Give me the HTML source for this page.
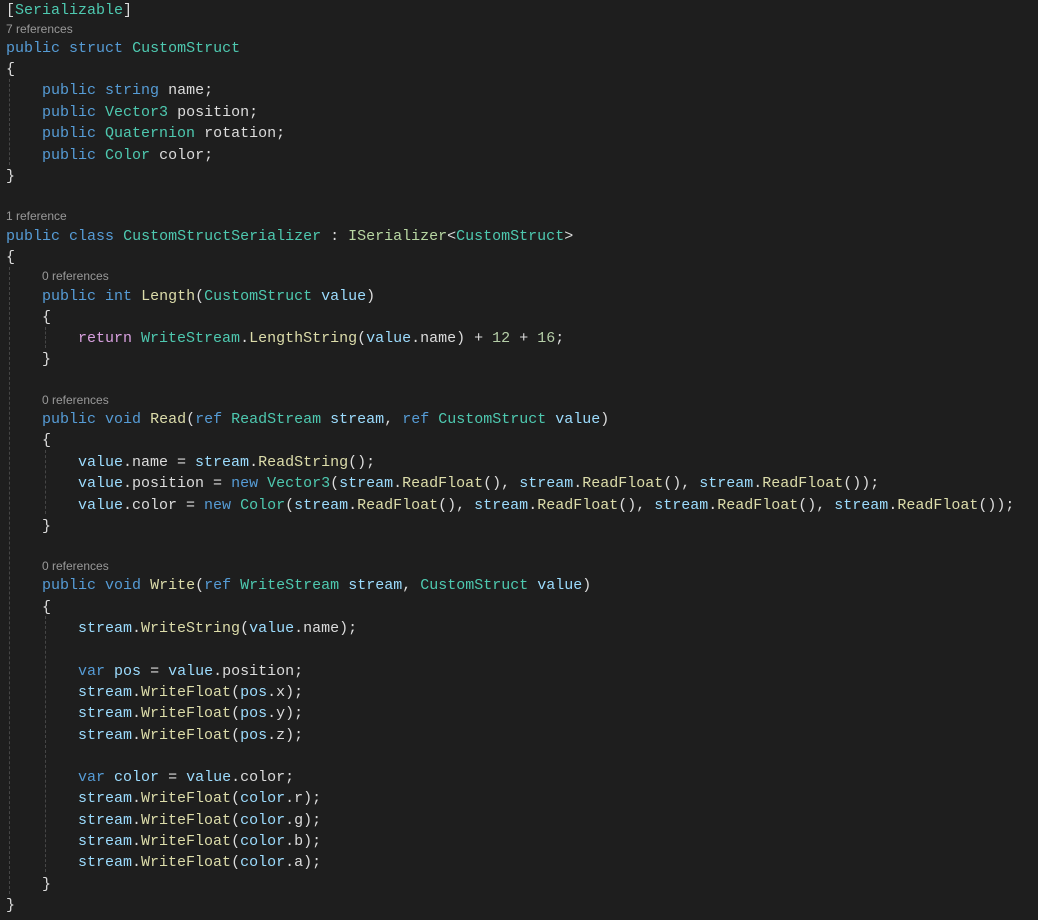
<!DOCTYPE html>
<html><head><meta charset="utf-8"><style>
html,body{margin:0;padding:0;background:#1e1e1e;width:1038px;height:920px;overflow:hidden}
.l{position:absolute;left:6px;height:21.33px;line-height:21.33px;white-space:pre;font-family:"Liberation Mono",monospace;font-size:15px;color:#dcdcdc;margin-top:2px}
.cl{position:absolute;white-space:pre;font-family:"Liberation Sans",sans-serif;font-size:12px;color:#999;height:16px;line-height:16px;margin-top:1px}
.g{position:absolute;width:0;border-left:1px dashed #464646}
.k{color:#569cd6}.t{color:#4ec9b0}.i{color:#b8d7a3}.v{color:#9cdcfe}.m{color:#dcdcaa}.c{color:#d8a0df}.n{color:#b5cea8}
</style></head><body>
<div class="g" style="left:9px;top:79px;height:86px"></div>
<div class="g" style="left:9px;top:267px;height:627px"></div>
<div class="g" style="left:45px;top:327px;height:21px"></div>
<div class="g" style="left:45px;top:450px;height:64px"></div>
<div class="g" style="left:45px;top:616px;height:256px"></div>

<div class="l" style="top:-2px">[<span class="t">Serializable</span>]</div>
<div class="cl" style="left:6px;top:20px">7 references</div>
<div class="l" style="top:36px"><span class="k">public</span> <span class="k">struct</span> <span class="t">CustomStruct</span></div>
<div class="l" style="top:57px">{</div>
<div class="l" style="top:78px">    <span class="k">public</span> <span class="k">string</span> name;</div>
<div class="l" style="top:100px">    <span class="k">public</span> <span class="t">Vector3</span> position;</div>
<div class="l" style="top:121px">    <span class="k">public</span> <span class="t">Quaternion</span> rotation;</div>
<div class="l" style="top:143px">    <span class="k">public</span> <span class="t">Color</span> color;</div>
<div class="l" style="top:164px">}</div>

<div class="cl" style="left:6px;top:207px">1 reference</div>
<div class="l" style="top:224px"><span class="k">public</span> <span class="k">class</span> <span class="t">CustomStructSerializer</span> : <span class="i">ISerializer</span>&lt;<span class="t">CustomStruct</span>&gt;</div>
<div class="l" style="top:245px">{</div>
<div class="cl" style="left:42px;top:267px">0 references</div>
<div class="l" style="top:284px">    <span class="k">public</span> <span class="k">int</span> <span class="m">Length</span>(<span class="t">CustomStruct</span> <span class="v">value</span>)</div>
<div class="l" style="top:305px">    {</div>
<div class="l" style="top:326px">        <span class="c">return</span> <span class="t">WriteStream</span>.<span class="m">LengthString</span>(<span class="v">value</span>.name) + <span class="n">12</span> + <span class="n">16</span>;</div>
<div class="l" style="top:347px">    }</div>

<div class="cl" style="left:42px;top:391px">0 references</div>
<div class="l" style="top:407px">    <span class="k">public</span> <span class="k">void</span> <span class="m">Read</span>(<span class="k">ref</span> <span class="t">ReadStream</span> <span class="v">stream</span>, <span class="k">ref</span> <span class="t">CustomStruct</span> <span class="v">value</span>)</div>
<div class="l" style="top:428px">    {</div>
<div class="l" style="top:450px">        <span class="v">value</span>.name = <span class="v">stream</span>.<span class="m">ReadString</span>();</div>
<div class="l" style="top:471px">        <span class="v">value</span>.position = <span class="k">new</span> <span class="t">Vector3</span>(<span class="v">stream</span>.<span class="m">ReadFloat</span>(), <span class="v">stream</span>.<span class="m">ReadFloat</span>(), <span class="v">stream</span>.<span class="m">ReadFloat</span>());</div>
<div class="l" style="top:493px">        <span class="v">value</span>.color = <span class="k">new</span> <span class="t">Color</span>(<span class="v">stream</span>.<span class="m">ReadFloat</span>(), <span class="v">stream</span>.<span class="m">ReadFloat</span>(), <span class="v">stream</span>.<span class="m">ReadFloat</span>(), <span class="v">stream</span>.<span class="m">ReadFloat</span>());</div>
<div class="l" style="top:514px">    }</div>

<div class="cl" style="left:42px;top:557px">0 references</div>
<div class="l" style="top:573px">    <span class="k">public</span> <span class="k">void</span> <span class="m">Write</span>(<span class="k">ref</span> <span class="t">WriteStream</span> <span class="v">stream</span>, <span class="t">CustomStruct</span> <span class="v">value</span>)</div>
<div class="l" style="top:595px">    {</div>
<div class="l" style="top:616px">        <span class="v">stream</span>.<span class="m">WriteString</span>(<span class="v">value</span>.name);</div>
<div class="l" style="top:659px">        <span class="k">var</span> <span class="v">pos</span> = <span class="v">value</span>.position;</div>
<div class="l" style="top:680px">        <span class="v">stream</span>.<span class="m">WriteFloat</span>(<span class="v">pos</span>.x);</div>
<div class="l" style="top:701px">        <span class="v">stream</span>.<span class="m">WriteFloat</span>(<span class="v">pos</span>.y);</div>
<div class="l" style="top:723px">        <span class="v">stream</span>.<span class="m">WriteFloat</span>(<span class="v">pos</span>.z);</div>
<div class="l" style="top:765px">        <span class="k">var</span> <span class="v">color</span> = <span class="v">value</span>.color;</div>
<div class="l" style="top:786px">        <span class="v">stream</span>.<span class="m">WriteFloat</span>(<span class="v">color</span>.r);</div>
<div class="l" style="top:808px">        <span class="v">stream</span>.<span class="m">WriteFloat</span>(<span class="v">color</span>.g);</div>
<div class="l" style="top:829px">        <span class="v">stream</span>.<span class="m">WriteFloat</span>(<span class="v">color</span>.b);</div>
<div class="l" style="top:850px">        <span class="v">stream</span>.<span class="m">WriteFloat</span>(<span class="v">color</span>.a);</div>
<div class="l" style="top:872px">    }</div>
<div class="l" style="top:893px">}</div>
</body></html>
